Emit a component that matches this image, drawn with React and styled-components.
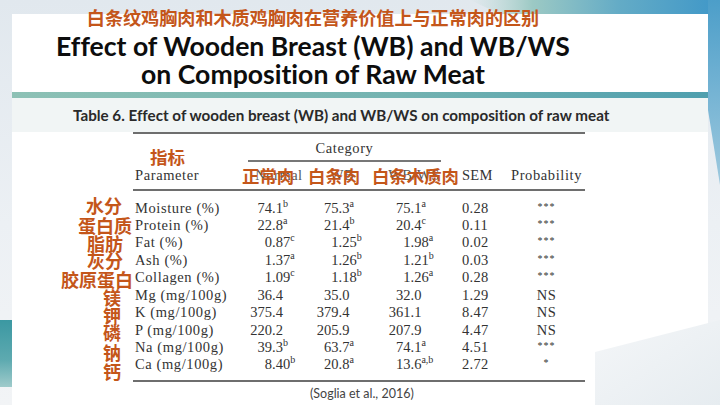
import styled, { createGlobalStyle } from "styled-components";

const GlobalStyle = createGlobalStyle`
  html, body { margin: 0; padding: 0; }
  body { width: 720px; height: 405px; overflow: hidden; }
`;

const ORANGE = "#c4561a";
const COLS = "93px 115px 62px 64px 80px 50px 85px";

const rows = [
  { cn: "水分", pr: 11, dy: -3, name: "Moisture (%)", n: ["74.1", "b"], wb: ["75.3", "a"], ws: ["75.1", "a"], sem: "0.28", p: "***" },
  { cn: "蛋白质", pr: 1, dy: 0, name: "Protein (%)", n: ["22.8", "a"], wb: ["21.4", "b"], ws: ["20.4", "c"], sem: "0.11", p: "***" },
  { cn: "脂肪", pr: 10, dy: 0, name: "Fat (%)", n: ["0.87", "c"], wb: ["1.25", "b"], ws: ["1.98", "a"], sem: "0.02", p: "***" },
  { cn: "灰分", pr: 10, dy: 0, name: "Ash (%)", n: ["1.37", "a"], wb: ["1.26", "b"], ws: ["1.21", "b"], sem: "0.03", p: "***" },
  { cn: "胶原蛋白", pr: 0, dy: 1, name: "Collagen (%)", n: ["1.09", "c"], wb: ["1.18", "b"], ws: ["1.26", "a"], sem: "0.28", p: "***" },
  { cn: "镁", pr: 12, dy: 2, name: "Mg (mg/100g)", n: ["36.4"], wb: ["35.0"], ws: ["32.0"], sem: "1.29", p: "NS" },
  { cn: "钾", pr: 12, dy: 2, name: "K (mg/100g)", n: ["375.4"], wb: ["379.4"], ws: ["361.1"], sem: "8.47", p: "NS" },
  { cn: "磷", pr: 12, dy: 2, name: "P (mg/100g)", n: ["220.2"], wb: ["205.9"], ws: ["207.9"], sem: "4.47", p: "NS" },
  { cn: "钠", pr: 12, dy: 4, name: "Na (mg/100g)", n: ["39.3", "b"], wb: ["63.7", "a"], ws: ["74.1", "a"], sem: "4.51", p: "***" },
  { cn: "钙", pr: 12, dy: 6, name: "Ca (mg/100g)", n: ["8.40", "b"], wb: ["20.8", "a"], ws: ["13.6", "a,b"], sem: "2.72", p: "*" },
];

const Num = ({ val, dec }) => {
  const [v, sup] = val;
  const [i, f] = v.split(".");
  return (
    <NumCell>
      <Int $w={dec}>{i}</Int>.{f}
      {sup && <Sup>{sup}</Sup>}
    </NumCell>
  );
};

const App = () => {
  return (
    <>
      <GlobalStyle />
      <Slide>
        <Backdrop viewBox="0 0 720 405" width="720" height="405">
          <defs>
            <linearGradient id="topBlue" x1="0" y1="0" x2="1" y2="0">
              <stop offset="0" stopColor="#b9d8d2" stopOpacity="0" />
              <stop offset="0.25" stopColor="#9cc9c4" />
              <stop offset="0.6" stopColor="#63abc6" />
              <stop offset="1" stopColor="#3f97c8" />
            </linearGradient>
            <linearGradient id="leftTeal" x1="0" y1="0" x2="0" y2="1">
              <stop offset="0" stopColor="#3b98a2" />
              <stop offset="0.6" stopColor="#5eaab0" />
              <stop offset="1" stopColor="#9fcbcb" />
            </linearGradient>
            <linearGradient id="sideBlue" x1="0" y1="0" x2="0" y2="1">
              <stop offset="0" stopColor="#4c9ec9" />
              <stop offset="1" stopColor="#9ec9de" />
            </linearGradient>
          </defs>
          <polygon points="470,0 720,0 720,14 500,14" fill="url(#topBlue)" />
          <polygon points="708,0 720,0 720,185 708,110" fill="url(#sideBlue)" />
          <rect x="0" y="320" width="12" height="67" fill="url(#leftTeal)" />
        </Backdrop>
        <Panel>
          <TitleBlock>
            <CnTitle>白条纹鸡胸肉和木质鸡胸肉在营养价值上与正常肉的区别</CnTitle>
            <EnTitle>
              Effect of Wooden Breast (WB) and WB/WS
              <br />
              on Composition of Raw Meat
            </EnTitle>
          </TitleBlock>
          <TealBar />
          <CaptionBand>
            Table 6. Effect of wooden breast (WB) and WB/WS on composition of raw meat
          </CaptionBand>
          <TableArea>
            <Rule />
            <Row $h={28}>
              <span />
              <IndexLabel>指标</IndexLabel>
              <Category>Category</Category>
            </Row>
            <Row $h={27}>
              <span />
              <Param>Parameter</Param>
              <HeadCell>
                Normal
                <HeadOverlay $left={-6}>正常肉</HeadOverlay>
              </HeadCell>
              <HeadCell>
                WB
                <HeadOverlay $left={-2}>白条肉</HeadOverlay>
              </HeadCell>
              <HeadCell>
                WB/WS
                <HeadOverlay $left={-2}>白条木质肉</HeadOverlay>
              </HeadCell>
              <Sem>SEM</Sem>
              <Prob>Probability</Prob>
            </Row>
            <Rule />
            <Body>
              {rows.map((r) => (
                <Row key={r.name} $h={17.45}>
                  <CnLabel $pr={r.pr} $dy={r.dy}>{r.cn}</CnLabel>
                  <Param>{r.name}</Param>
                  <Num val={r.n} dec={24} />
                  <Num val={r.wb} dec={28.5} />
                  <Num val={r.ws} dec={36.5} />
                  <Sem>{r.sem}</Sem>
                  <Prob>{r.p === "NS" ? "NS" : <Stars>{r.p}</Stars>}</Prob>
                </Row>
              ))}
            </Body>
            <Rule $top={7} />
            <Citation>(Soglia et al., 2016)</Citation>
          </TableArea>
        </Panel>
        <Wedge viewBox="0 0 125 85" width="125" height="85">
          <defs>
            <linearGradient id="wedgeFill" x1="0" y1="0" x2="1" y2="1">
              <stop offset="0" stopColor="#f4f6f8" />
              <stop offset="1" stopColor="#e6ecf0" />
            </linearGradient>
          </defs>
          <polygon points="0,32 125,0 125,85 0,85" fill="url(#wedgeFill)" />
        </Wedge>
      </Slide>
    </>
  );
};

export default App;

const Slide = styled.div`
  position: relative;
  width: 720px;
  height: 405px;
  overflow: hidden;
  background: linear-gradient(180deg, #e1e8ee 0%, #ecf0f4 55%, #f2f4f6 100%);
`;
const Backdrop = styled.svg`
  position: absolute;
  top: 0;
  left: 0;
`;
const Wedge = styled.svg`
  position: absolute;
  right: 0;
  bottom: 0;
  z-index: 2;
`;
const Panel = styled.div`
  position: relative;
  z-index: 1;
  margin: 14px 0 0 12px;
  width: 696px;
  height: 391px;
  background: #ffffff;
  display: flex;
  flex-direction: column;
`;
const TitleBlock = styled.div`
  height: 78px;
  box-sizing: border-box;
  padding-right: 94px;
  display: flex;
  flex-direction: column;
  align-items: center;
`;
const CnTitle = styled.div`
  margin-top: -7px;
  font-family: "Noto Sans CJK SC", sans-serif;
  font-weight: 700;
  font-size: 18.1px;
  line-height: 20px;
  color: ${ORANGE};
  white-space: nowrap;
`;
const EnTitle = styled.div`
  margin-top: 5px;
  font-family: Lato, "Liberation Sans", sans-serif;
  font-weight: 700;
  font-size: 26.6px;
  line-height: 28px;
  color: #0d0d0d;
  text-align: center;
  white-space: nowrap;
  font-variant-ligatures: none;
`;
const TealBar = styled.div`
  height: 6px;
  background: linear-gradient(90deg, #8dc1b5 0%, #74b3b1 55%, #4f9fae 100%);
`;
const CaptionBand = styled.div`
  height: 34px;
  box-sizing: border-box;
  padding-left: 61px;
  display: flex;
  align-items: center;
  background: #f1f5f5;
  font-family: Lato, "Liberation Sans", sans-serif;
  font-weight: 700;
  font-size: 15.2px;
  color: #2a2a2a;
  white-space: nowrap;
  font-variant-ligatures: none;
`;
const TableArea = styled.div`
  flex: 1;
  padding-left: 28px;
  font-family: "Liberation Serif", serif;
  font-size: 14.5px;
  color: #333333;
`;
const Rule = styled.div`
  margin-left: 93px;
  margin-top: ${(p) => p.$top || 0}px;
  width: 452px;
  height: 2px;
  background: #6e6e6e;
`;
const Body = styled.div`
  margin-top: 8px;
`;
const Row = styled.div`
  display: grid;
  grid-template-columns: ${COLS};
  height: ${(p) => p.$h}px;
  align-items: center;
  white-space: nowrap;
`;
const IndexLabel = styled.div`
  align-self: end;
  margin-bottom: -5px;
  padding-left: 17px;
  font-family: "Noto Sans CJK SC", sans-serif;
  font-weight: 700;
  font-size: 17.5px;
  line-height: 20px;
  color: ${ORANGE};
`;
const Category = styled.div`
  grid-column: 3 / span 3;
  align-self: end;
  margin-right: 13px;
  padding-bottom: 3px;
  line-height: 18px;
  text-align: center;
  letter-spacing: 0.6px;
  border-bottom: 2px solid #777777;
`;
const Param = styled.div`
  padding-left: 2px;
  letter-spacing: 0.6px;
`;
const HeadCell = styled.div`
  position: relative;
  text-align: center;
  color: #555;
  letter-spacing: 0.5px;
`;
const HeadOverlay = styled.span`
  position: absolute;
  left: ${(p) => p.$left}px;
  top: 50%;
  transform: translateY(-50%);
  font-family: "Noto Sans CJK SC", sans-serif;
  font-weight: 700;
  font-size: 17.4px;
  line-height: 20px;
  color: ${ORANGE};
  letter-spacing: 0;
`;
const Sem = styled.div`
  padding-left: 8px;
  letter-spacing: 0.3px;
`;
const Prob = styled.div`
  text-align: center;
  letter-spacing: 0.6px;
`;
const Stars = styled.span`
  position: relative;
  top: -3px;
  font-size: 10px;
  letter-spacing: 1px;
`;
const CnLabel = styled.div`
  text-align: right;
  padding-right: ${(p) => p.$pr}px;
  transform: translateY(${(p) => p.$dy}px);
  font-family: "Noto Sans CJK SC", sans-serif;
  font-weight: 700;
  font-size: 18px;
  line-height: 18px;
  color: ${ORANGE};
`;
const NumCell = styled.div`
  letter-spacing: 0;
`;
const Int = styled.span`
  display: inline-block;
  width: ${(p) => p.$w}px;
  text-align: right;
`;
const Sup = styled.span`
  position: relative;
  top: -6px;
  font-size: 10px;
  line-height: 0;
`;
const Citation = styled.div`
  margin-top: 5px;
  padding-left: 270px;
  font-family: Lato, "Liberation Sans", sans-serif;
  font-size: 12.5px;
  line-height: 14px;
  color: #444444;
`;
